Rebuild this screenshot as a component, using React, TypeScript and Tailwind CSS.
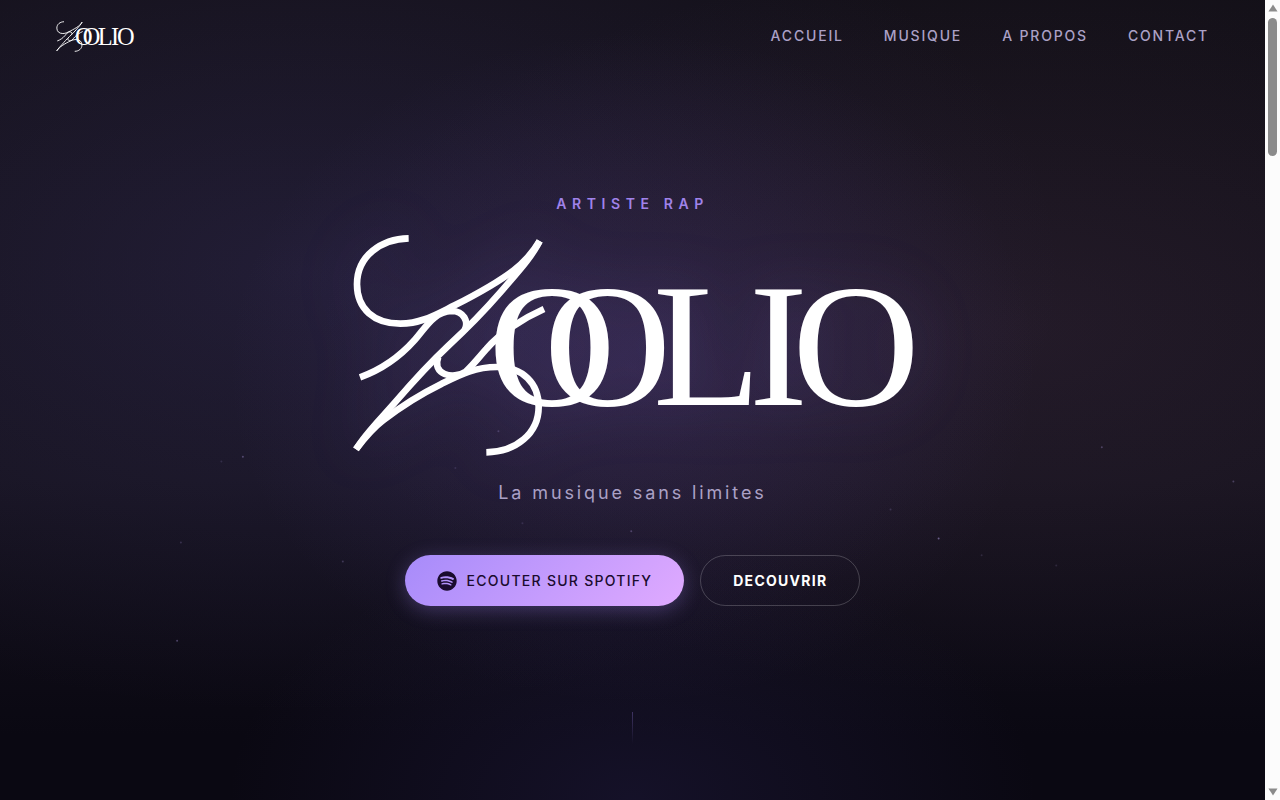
import { FaSpotify } from 'react-icons/fa'

const links = [
  { label: 'Accueil', href: '#accueil' },
  { label: 'Musique', href: '#musique' },
  { label: 'A propos', href: '#a-propos' },
  { label: 'Contact', href: '#contact' },
]

// Floating dust behind the hero, in % of the section
const particles = [
  { x: 19.2, y: 57.1, o: 0.35 },
  { x: 17.5, y: 57.7, o: 0.15 },
  { x: 14.3, y: 67.8, o: 0.2 },
  { x: 14, y: 80.1, o: 0.35 },
  { x: 27.1, y: 70.2, o: 0.25 },
  { x: 36, y: 58.5, o: 0.15 },
  { x: 39.4, y: 53.9, o: 0.25 },
  { x: 41.3, y: 65.4, o: 0.15 },
  { x: 49.9, y: 66.4, o: 0.3 },
  { x: 70.4, y: 63.7, o: 0.2 },
  { x: 74.2, y: 67.3, o: 0.5 },
  { x: 77.6, y: 69.4, o: 0.15 },
  { x: 87.1, y: 55.9, o: 0.3 },
  { x: 83.5, y: 70.7, o: 0.15 },
  { x: 97.5, y: 60.2, o: 0.3 },
]

export default function App() {
  return (
    <div className="flex min-h-screen font-['Inter',sans-serif]">
      <div className="relative isolate flex min-w-0 flex-1 flex-col overflow-hidden bg-[#0a0812]">
        <Backdrop />
        <Navbar />
        <Hero />
      </div>
      <Scrollbar />
    </div>
  )
}

function Backdrop() {
  return (
    <div
      aria-hidden="true"
      className="absolute inset-0 -z-10 bg-[radial-gradient(ellipse_32%_42%_at_50%_46%,rgba(110,80,180,0.18),transparent),radial-gradient(ellipse_60%_55%_at_24%_34%,rgba(84,72,150,0.22),transparent),radial-gradient(ellipse_55%_46%_at_80%_41%,rgba(115,75,110,0.16),transparent),radial-gradient(ellipse_32%_32%_at_50%_100%,rgba(60,50,120,0.22),transparent),linear-gradient(to_bottom,#131018_0%,#15121d_60%,#0a0812_92%)]"
    >
      <svg className="h-full w-full">
        {particles.map(p => (
          <circle key={`${p.x}-${p.y}`} cx={`${p.x}%`} cy={`${p.y}%`} r="1" fill="#b9a5f0" opacity={p.o} />
        ))}
      </svg>
    </div>
  )
}

function Navbar() {
  return (
    <header className="flex h-[72px] shrink-0 items-center justify-between px-14">
      <a href="#accueil" aria-label="Zoolio">
        <Logo className="w-[78px]" />
      </a>
      <nav className="flex gap-10">
        {links.map(link => (
          <a
            key={link.href}
            href={link.href}
            className="text-[14px] leading-5 font-medium tracking-[0.13em] text-[#aba1c6] uppercase hover:text-white"
          >
            {link.label}
          </a>
        ))}
      </nav>
    </header>
  )
}

function Hero() {
  return (
    <main className="flex flex-1 flex-col items-center pt-[122px]">
      <p className="text-[14px] leading-5 font-semibold tracking-[0.4em] text-[#a083ea] uppercase">Artiste Rap</p>
      <h1 className="mt-[19px] w-full max-w-[564px]">
        <Logo className="w-full drop-shadow-[0_0_30px_rgba(150,120,240,0.18)]" />
      </h1>
      <p className="mt-6 text-[18px] leading-6 tracking-[0.16em] text-[#aba1c6]">La musique sans limites</p>
      <div className="mt-[50px] flex gap-4">
        <a
          href="#spotify"
          className="flex h-[51px] items-center gap-2.5 rounded-full bg-linear-135 from-[#a78bfa] to-[#e0aaff] px-8 text-[14px] font-medium tracking-[0.09em] text-[#1a0b2e] uppercase shadow-[0_4px_20px_rgba(167,139,250,0.3)]"
        >
          <FaSpotify className="size-5" />
          Ecouter sur Spotify
        </a>
        <a
          href="#musique"
          className="flex h-[51px] items-center rounded-full border border-white/20 px-8 text-[14px] font-bold tracking-[0.09em] text-white uppercase"
        >
          Decouvrir
        </a>
      </div>
      <div className="mt-auto mb-14 h-8 w-px bg-linear-to-b from-[#a78bfa]/30 to-transparent" />
    </main>
  )
}

function Logo({ className }: { className: string }) {
  return (
    <svg viewBox="34 24 1692 672" className={`block overflow-visible ${className}`} role="img" aria-label="Zoolio">
      <g fill="none" stroke="#fff" strokeWidth="20">
        {/* Upper hook and its mirrored lower hook */}
        <path d="M207 40C125 42 52 92 52 178C52 252 103 296 182 296C245 296 290 268 345 241C410 208 475 172 522 136C560 107 582 78 600 48" />
        <path d="M440 682C530 680 597 625 597 545C597 475 550 426 472 426C405 426 360 450 305 477C240 509 177 550 130 586C92 615 70 645 49 673" />
        {/* Diagonal */}
        <path d="M600 48C575 98 535 140 484 200C438 253 385 308 326 362C260 424 216 474 168 530C125 580 80 622 49 673" />
        {/* Inner loops with their arms */}
        <path d="M61 457C130 432 185 390 225 345C258 308 282 260 336 258C372 258 388 290 375 315" />
        <path d="M613 252C550 280 480 325 440 372C415 400 400 420 378 440C340 465 275 448 296 396" />
      </g>
      <text
        x="446 612 940 1228 1358"
        y="540"
        fill="#fff"
        fontSize="530"
        fontFamily="'Liberation Serif', serif"
      >
        OOLIO
      </text>
    </svg>
  )
}

function Scrollbar() {
  return (
    <div aria-hidden="true" className="flex w-[15px] shrink-0 flex-col items-center bg-[#fcfcfc] py-1">
      <svg viewBox="0 0 10 8" className="h-2 w-2.5 fill-[#8b8b8b]">
        <path d="M5 0.5L9.5 7.5H0.5z" />
      </svg>
      <div className="mt-1.5 h-[138px] w-[9px] rounded-full bg-[#8b8b8b]" />
      <svg viewBox="0 0 10 8" className="mt-auto h-2 w-2.5 fill-[#8b8b8b]">
        <path d="M5 7.5L0.5 0.5H9.5z" />
      </svg>
    </div>
  )
}
